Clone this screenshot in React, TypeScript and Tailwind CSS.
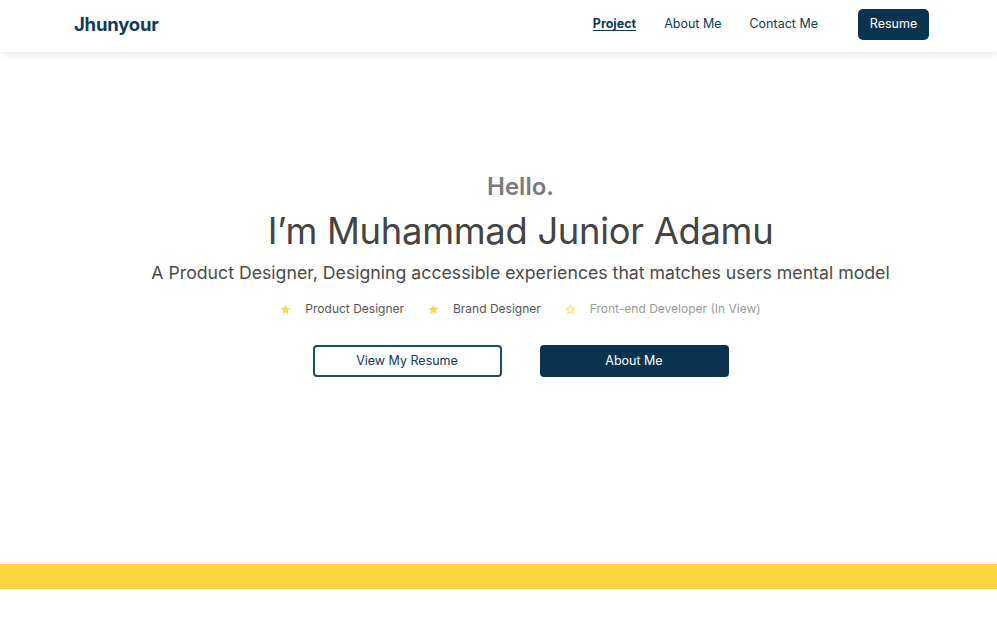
import React from "react";

const Star = ({ filled }: { filled: boolean }) => (
  <svg width="11" height="11" viewBox="0 0 24 24">
    <path
      d="M12 2.5l2.9 6.1 6.6.8-4.9 4.6 1.3 6.6L12 17.3l-5.9 3.3 1.3-6.6-4.9-4.6 6.6-.8z"
      fill={filled ? "#fcd53f" : "none"}
      stroke="#fcd53f"
      strokeWidth={filled ? 1 : 2}
      strokeLinejoin="round"
    />
  </svg>
);

export default function App() {
  return (
    <div className="min-h-[624px] bg-white" style={{ fontFamily: "Inter, 'Noto Sans', sans-serif" }}>
      <header className="relative z-10 h-[52px] flex items-center justify-between pb-[3px] pl-[74px] pr-[68px] bg-white shadow-[0_2px_8px_rgba(0,0,0,0.10)]">
        <div className="text-[18.5px] font-bold text-[#0f3a5a] tracking-[-0.2px]">Jhunyour</div>
        <nav className="flex items-center text-[12.5px] text-[#0f3a5a]">
          <a className="font-bold underline underline-offset-2 mr-[28px]">Project</a>
          <a className="mr-[28px]">About Me</a>
          <a className="mr-[40px]">Contact Me</a>
          <button className="h-[31px] w-[71px] rounded-[5px] bg-[#0a3350] text-white text-[12.5px]">Resume</button>
        </nav>
      </header>
      <section className="flex flex-col items-center pt-[120px] pl-[44px] h-[512px]">
        <div className="text-[24px] leading-[30px] font-semibold text-[#7b7b7b]">Hello.</div>
        <h1 className="mt-[7px] text-[36.4px] leading-[44px] text-[#444444] tracking-[-0.3px]">I’m Muhammad Junior Adamu</h1>
        <p className="mt-[7px] text-[17.7px] leading-[26px] text-[#4a4a4a]">
          A Product Designer, Designing accessible experiences that matches users mental model
        </p>
        <div className="mt-[14px] flex items-center text-[12px] leading-[18px]">
          <Star filled />
          <span className="ml-[14px] text-[#555555]">Product Designer</span>
          <span className="ml-[24px] flex"><Star filled /></span>
          <span className="ml-[14px] text-[#555555]">Brand Designer</span>
          <span className="ml-[24px] flex"><Star filled={false} /></span>
          <span className="ml-[14px] text-[#9a9a9a]">Front-end Developer (In View)</span>
        </div>
        <div className="mt-[27px] flex gap-[38px]">
          <button className="w-[189px] h-[32px] rounded-[4px] border-2 border-[#1f4a6a] text-[#0f3a5a] text-[12.5px] bg-white">View My Resume</button>
          <button className="w-[189px] h-[32px] rounded-[4px] bg-[#0a3350] text-white text-[12.5px]">About Me</button>
        </div>
      </section>
      <div className="h-[25px] bg-[#fcd53f]" />
      <div className="h-[35px] bg-white" />
    </div>
  );
}
